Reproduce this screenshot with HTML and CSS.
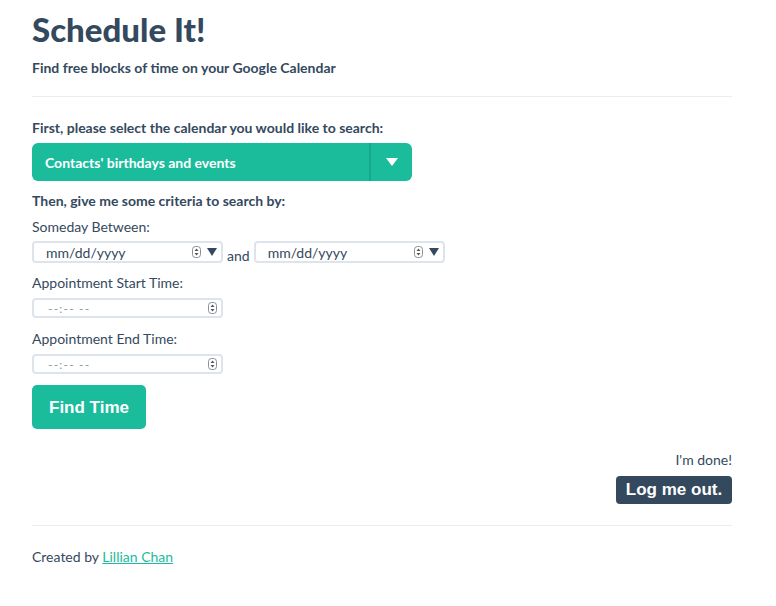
FILE: index.html
```html
<!DOCTYPE html>
<html>
<head>
<meta charset="utf-8">
<link rel="stylesheet" href="styles.css">
</head>
<body>
<div class="page">
  <header class="header">
    <h1 class="title">Schedule It!</h1>
    <p class="subtitle">Find free blocks of time on your Google Calendar</p>
  </header>
  <main class="main">
    <p class="strong-label">First, please select the calendar you would like to search:</p>
    <div class="select">
      <span class="select-text">Contacts' birthdays and events</span>
      <span class="select-caret"><svg width="12" height="8" viewBox="0 0 12 8"><path d="M0 0H12L6 8Z" fill="#fff"/></svg></span>
    </div>
    <p class="strong-label second">Then, give me some criteria to search by:</p>
    <p class="label">Someday Between:</p>
    <div class="date-row">
      <div class="field date"><span class="ph">mm/dd/yyyy</span><span class="spin"><svg width="9" height="12" viewBox="0 0 9 12"><rect x="0.5" y="0.5" width="8" height="11" rx="3" fill="#fff" stroke="#8a8f95"/><path d="M2.5 5H6.5L4.5 2.5Z M2.5 7H6.5L4.5 9.5Z" fill="#555"/></svg></span><span class="tri"><svg width="10" height="8" viewBox="0 0 10 8"><path d="M0 0H10L5 8Z" fill="#34495e"/></svg></span></div>
      <span class="and">and</span>
      <div class="field date"><span class="ph">mm/dd/yyyy</span><span class="spin"><svg width="9" height="12" viewBox="0 0 9 12"><rect x="0.5" y="0.5" width="8" height="11" rx="3" fill="#fff" stroke="#8a8f95"/><path d="M2.5 5H6.5L4.5 2.5Z M2.5 7H6.5L4.5 9.5Z" fill="#555"/></svg></span><span class="tri"><svg width="10" height="8" viewBox="0 0 10 8"><path d="M0 0H10L5 8Z" fill="#34495e"/></svg></span></div>
    </div>
    <p class="label gap">Appointment Start Time:</p>
    <div class="field time"><span class="ph small">--:-- --</span><span class="spin"><svg width="9" height="12" viewBox="0 0 9 12"><rect x="0.5" y="0.5" width="8" height="11" rx="3" fill="#fff" stroke="#8a8f95"/><path d="M2.5 5H6.5L4.5 2.5Z M2.5 7H6.5L4.5 9.5Z" fill="#555"/></svg></span></div>
    <p class="label gap2">Appointment End Time:</p>
    <div class="field time"><span class="ph small">--:-- --</span><span class="spin"><svg width="9" height="12" viewBox="0 0 9 12"><rect x="0.5" y="0.5" width="8" height="11" rx="3" fill="#fff" stroke="#8a8f95"/><path d="M2.5 5H6.5L4.5 2.5Z M2.5 7H6.5L4.5 9.5Z" fill="#555"/></svg></span></div>
    <button class="btn-find">Find Time</button>
    <div class="done">
      <p class="done-text">I'm done!</p>
      <button class="btn-logout">Log me out.</button>
    </div>
  </main>
  <footer class="footer">
    <p class="credit">Created by <a href="#" class="link">Lillian Chan</a></p>
  </footer>
</div>
</body>
</html>
```
FILE: styles.css
```css
* { box-sizing: border-box; }
html, body { margin: 0; padding: 0; background: #fff; }
body { font-family: Lato, "Open Sans", sans-serif; color: #34495e; font-size: 14px; }
p { margin: 0; }
.page { width: 700px; margin-left: 32px; }
.header { padding-top: 10px; padding-bottom: 19px; border-bottom: 1px solid #eaecee; }
.title { margin: 0; font-size: 33px; font-weight: 900; line-height: 38px; }
.subtitle { margin-top: 11px; font-size: 14px; font-weight: 700; line-height: 18px; }
.main { padding-top: 22px; padding-bottom: 21px; border-bottom: 1px solid #eaecee; }
.strong-label { font-weight: 700; line-height: 18px; }
.select { margin-top: 6px; width: 380px; height: 38px; background: #1abc9c; border-radius: 6px; display: flex; align-items: center; color: #fff; font-weight: 700; }
.select-text { flex: 1; padding-left: 13px; }
.select-caret { width: 43px; height: 38px; border-left: 2px solid #17a88b; display: flex; align-items: center; justify-content: center; }
.second { margin-top: 11px; }
.label { margin-top: 8px; line-height: 18px; }
.label.gap { margin-top: 11px; }
.label.gap2 { margin-top: 12px; }
.date-row { margin-top: 5px; display: flex; align-items: flex-end; gap: 4px; }
.and { line-height: 14px; }
.field { width: 191px; border: 2px solid #dde4ec; border-radius: 4px; display: flex; align-items: center; padding-left: 12px; padding-right: 4px; background: #fff; }
.date { height: 22px; }
.date .ph { flex: 1; font-size: 14px; color: #34495e; }
.ph.small { flex: 1; font-size: 12px; color: #8a97a3; letter-spacing: 1.2px; padding-left: 2px; }
.spin { display: flex; }
.tri { display: flex; margin-left: 6px; }
.time { height: 20px; margin-top: 6px; }
.btn-find { margin-top: 11px; width: 114px; height: 44px; border: 0; border-radius: 5px; background: #1abc9c; color: #fff; font-family: "Liberation Sans", Arial, sans-serif; font-weight: 700; font-size: 17px; padding: 2px 0 0; display: block; }
.done { margin-top: 23px; display: flex; flex-direction: column; align-items: flex-end; }
.done-text { line-height: 16px; }
.btn-logout { margin-top: 8px; width: 116px; height: 28px; border: 0; border-radius: 4px; background: #34495e; color: #fff; font-family: "Liberation Sans", Arial, sans-serif; font-weight: 700; font-size: 17px; padding: 0; }
.footer { padding-top: 22px; }
.credit { line-height: 18px; }
.link { color: #1abc9c; text-decoration: underline; }
```
